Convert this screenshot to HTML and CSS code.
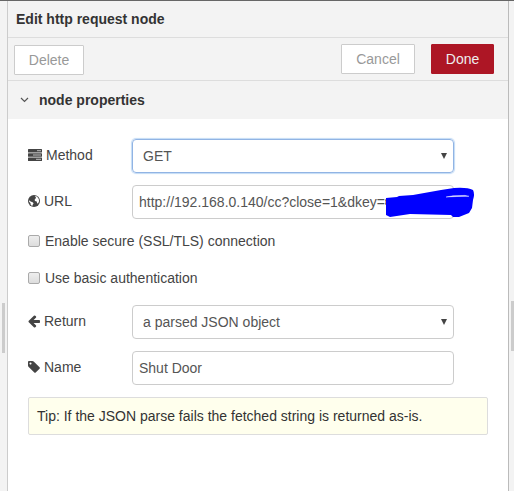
FILE: index.html
```html
<!DOCTYPE html>
<html lang="en">
<head>
<meta charset="utf-8">
<title>Edit http request node</title>
<link rel="stylesheet" href="styles.css">
</head>
<body>
<div class="app">
  <div class="gutter left"><span class="grip"></span></div>
  <main class="tray">
    <header class="title">Edit http request node</header>
    <div class="toolbar">
      <button class="btn delete">Delete</button>
      <button class="btn cancel">Cancel</button>
      <button class="btn primary">Done</button>
    </div>
    <div class="section">
      <svg class="chevron" viewBox="0 0 9 6"><path d="M1 1l3.5 3.5L8 1" fill="none" stroke="#555" stroke-width="1.2"/></svg>
      <span>node properties</span>
    </div>
    <form class="form">
      <div class="row">
        <label><svg class="icon wide" viewBox="0 0 14 14"><rect y="1" width="14" height="3.5" rx=".5"/><rect y="5.3" width="14" height="3.5" rx=".5"/><rect y="9.6" width="14" height="3.5" rx=".5"/><path class="slot" d="M9 2.7h4M5 7h8M8 11.3h5"/></svg>Method</label>
        <div class="field select focus"><span>GET</span><svg class="caret" viewBox="0 0 6 6"><path d="M0 0h6L3 6z"/></svg></div>
      </div>
      <div class="row">
        <label><svg class="icon" viewBox="0 0 12 14"><circle cx="6" cy="7" r="6"/><path class="land" d="M6.7 2.1L9 2.6 10.8 5 11.1 7.3 10.2 9.3 9.2 9.5 8.7 7.6 7 7.1 6.6 5.8 7.6 4.5 8 3.6zM1.2 6.2L2.6 7.5 4.6 8.2 5.6 9.3 4.8 10.6 4.3 12 2.8 11 2.4 9.1 1.1 7.8z"/></svg>URL</label>
        <div class="field">http://192.168.0.140/cc?close=1&amp;dkey=
          <svg class="scribble" viewBox="0 0 90 32"><path d="M1 12Q-1 15 1 18" fill="none" stroke="#bd7654"/><path d="M1 11L12 10 14 9 28 8 56 3 69 1Q82 0 88 3Q90 7 88 13L87 21 84 26 74 30 68 30 66 28 25 27 5 30 1 28z" fill="#00f"/><path d="M61 10L68 8.8 80 8.4 84 9.3 72 9.5z" fill="#fff" stroke="#fff" stroke-width=".4"/></svg>
        </div>
      </div>
      <div class="check"><span class="box"></span>Enable secure (SSL/TLS) connection</div>
      <div class="check"><span class="box"></span>Use basic authentication</div>
      <div class="row">
        <label><svg class="icon" viewBox="128 0 1536 1792"><path d="M1664 896v128q0 53-32.5 90.5t-84.5 37.5h-704l293 294q38 36 38 90t-38 90l-75 76q-37 37-90 37-52 0-91-37l-651-652q-37-37-37-90 0-52 37-91l651-650q38-38 91-38 52 0 90 38l75 74q38 38 38 91t-38 91l-293 293h704q52 0 84.5 37.5t32.5 90.5z"/></svg>Return</label>
        <div class="field select"><span>a parsed JSON object</span><svg class="caret" viewBox="0 0 6 6"><path d="M0 0h6L3 6z"/></svg></div>
      </div>
      <div class="row">
        <label><svg class="icon" viewBox="128 0 1536 1792"><path d="M576 448q0-53-37.5-90.5t-90.5-37.5-90.5 37.5-37.5 90.5 37.5 90.5 90.5 37.5 90.5-37.5 37.5-90.5zm1067 576q0 53-37 90l-491 492q-39 37-91 37-53 0-90-37l-715-716q-38-37-64.5-101t-26.5-117v-416q0-52 38-90t90-38h416q53 0 117 26.5t102 64.5l715 714q37 39 37 91z"/></svg>Name</label>
        <div class="field">Shut Door</div>
      </div>
      <div class="tip">Tip: If the JSON parse fails the fetched string is returned as-is.</div>
    </form>
  </main>
  <div class="gutter right"><span class="grip"></span></div>
</div>
</body>
</html>
```
FILE: styles.css
```css
* { box-sizing: border-box; }
body {
  margin: 0;
  font: 14px/20px "Liberation Sans", Arial, sans-serif;
  color: #444;
  overflow: hidden;
}
.app {
  display: grid;
  grid-template-columns: 7px 502px 5px;
  height: 491px;
  border-top: 1px solid #666;
  background: #f3f3f3;
}
.gutter { display: flex; }
.grip { height: 50px; background: #ccc; }
.left .grip { width: 3px; margin: 302px 0 0 2px; }
.right .grip { width: 3px; margin: 300px 0 0 2px; }
.tray {
  border-left: 1px solid #ccc;
  border-right: 1px solid #bbb;
  background: #fff;
}
.title {
  height: 37px;
  padding: 8px;
  border-bottom: 1px solid #ddd;
  background: #f3f3f3;
  color: #333;
  font-weight: bold;
}
.toolbar {
  display: flex;
  height: 43px;
  padding: 6px 14px 0 6px;
  border-bottom: 1px solid #ddd;
  background: #f3f3f3;
}
.btn {
  height: 30px;
  padding: 0;
  border: 1px solid #ccc;
  border-radius: 1px;
  background: #fff;
  color: #999;
  font: 14px/26px "Liberation Sans", Arial, sans-serif;
}
.delete { width: 70px; margin: 1px auto 0 0; }
.cancel { width: 74px; margin-right: 16px; }
.primary { width: 63px; border-color: #ad1625; background: #ad1625; color: #eee; }
.section {
  display: flex;
  align-items: center;
  gap: 10px;
  height: 38px;
  padding-left: 12px;
  background: #f3f3f3;
  color: #333;
  font-weight: bold;
}
.chevron { width: 9px; height: 6px; }
.form { padding: 20px 20px 0; }
.row { display: flex; align-items: center; height: 34px; margin-bottom: 12px; }
label { display: flex; align-items: center; gap: 4px; width: 104px; height: 32px; padding-bottom: 2px; }
.icon { width: 12px; height: 14px; fill: #444; }
.icon.wide { width: 14px; }
.icon .land { fill: #fff; }
.slot { stroke: #ccc; stroke-width: .9; }
.field {
  position: relative;
  width: 322px;
  height: 34px;
  padding: 6px;
  border: 1px solid #ccc;
  border-radius: 4px;
  color: #555;
  white-space: nowrap;
}
.select { display: flex; justify-content: space-between; align-items: center; padding: 0 6px 0 10px; }
.focus { border-color: #91b4e4; box-shadow: 0 0 1px 1px #c3dbf5; }
.caret { width: 6px; height: 6px; fill: #444; }
.scribble { position: absolute; left: 252px; top: 1px; width: 90px; height: 32px; }
.check { display: flex; align-items: center; gap: 5px; height: 20px; margin-bottom: 17px; }
.box {
  width: 12px;
  height: 12px;
  border: 1px solid #aaa;
  border-radius: 2px;
  background: linear-gradient(#eee, #ddd);
}
.tip {
  height: 38px;
  padding: 8px;
  border: 1px solid #ddd;
  border-radius: 2px;
  background: #ffffed;
  color: #333;
}
```
